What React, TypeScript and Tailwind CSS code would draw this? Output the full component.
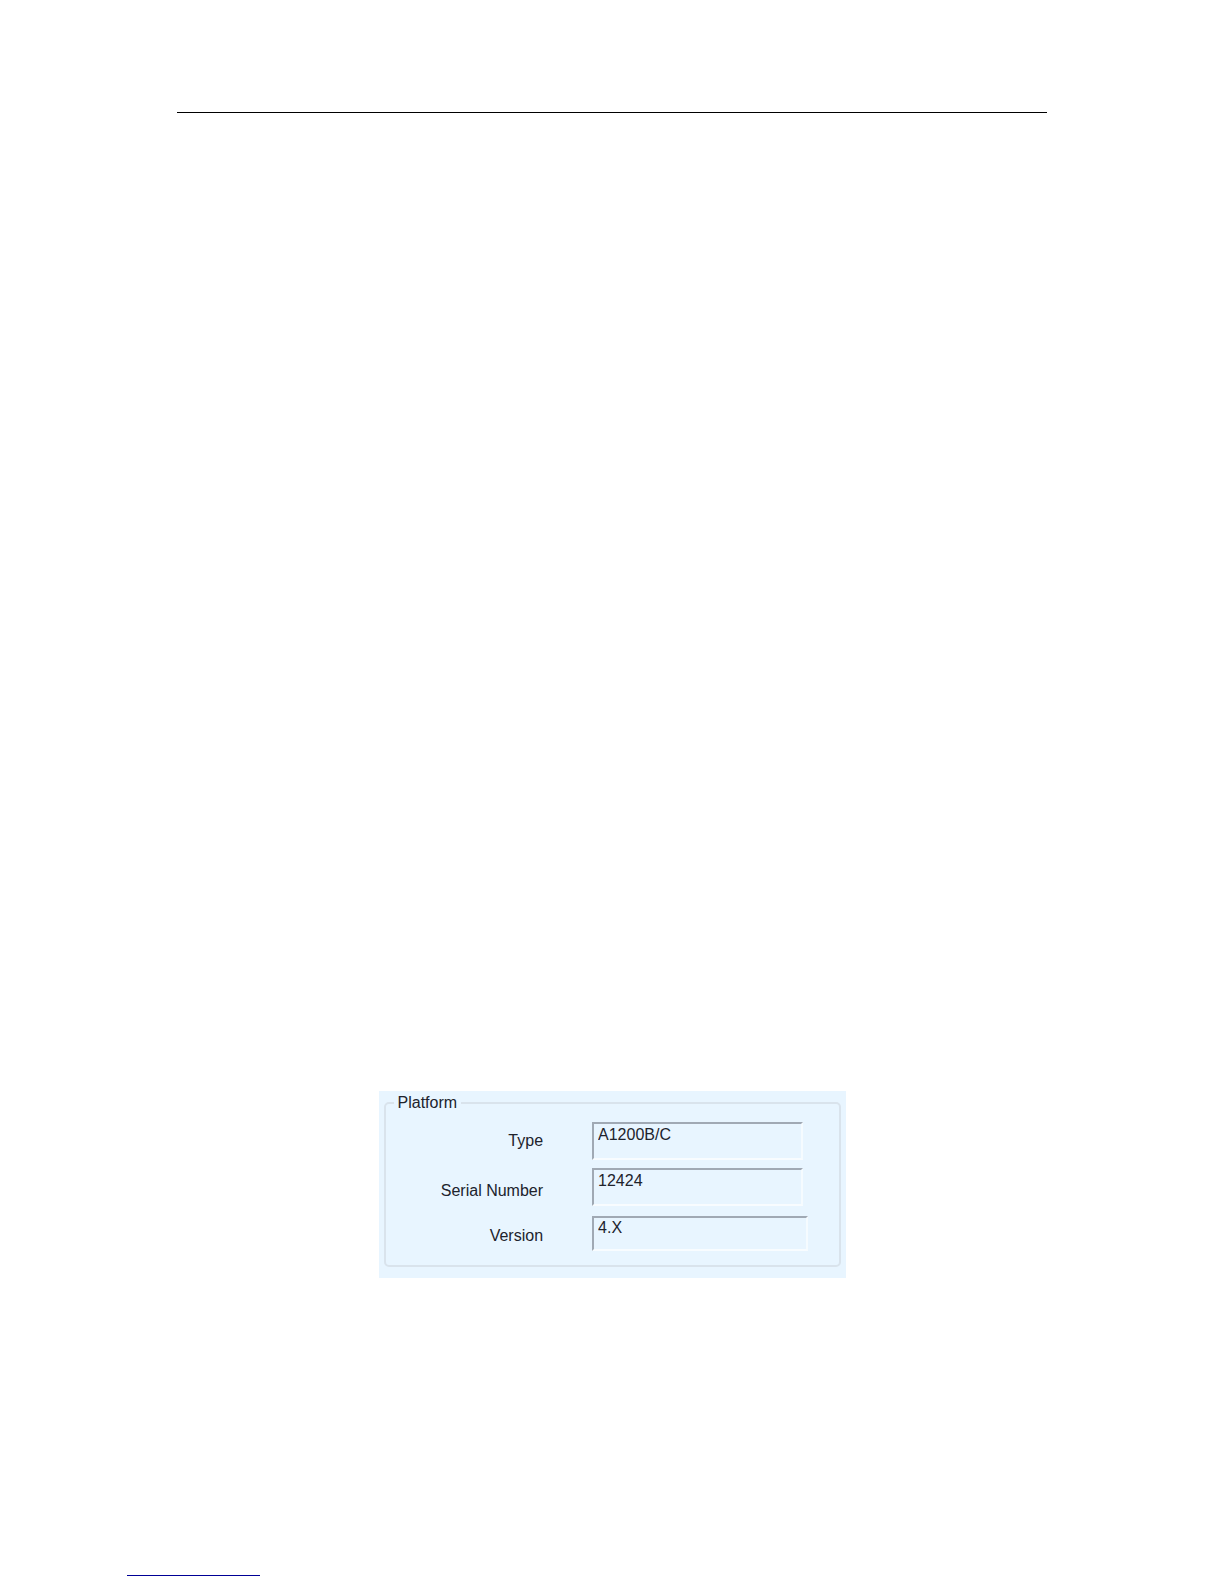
import React from "react";

type Field = {
  id: string;
  label: string;
  value: string;
  row: string;
  labelPad: string;
  box: string;
};

const fields: Field[] = [
  { id: "type", label: "Type", value: "A1200B/C", row: "", labelPad: "pb-[7px]", box: "h-[38px] mr-9" },
  { id: "serial", label: "Serial Number", value: "12424", row: "mt-2", labelPad: "pb-[3px]", box: "h-[38px] mr-9" },
  { id: "version", label: "Version", value: "4.X", row: "mt-2.5", labelPad: "pb-[3px]", box: "h-[35px] mr-[31px]" },
];

function PlatformPanel() {
  return (
    <section className="mx-auto w-full max-w-[467px] bg-[#e8f5ff] px-[5px] pt-0.5 pb-[11px] text-base leading-6 text-[#20232c]">
      <fieldset className="min-w-0 rounded-[5px] border-2 border-[#d9e3ec] pb-3.5">
        <legend className="ml-2 px-1 leading-5">Platform</legend>
        <div className="pt-[9px]">
          {fields.map((f) => (
            <div key={f.id} className={`flex items-end ${f.row}`}>
              <label htmlFor={f.id} className={`w-[35%] shrink-0 pr-px text-right ${f.labelPad}`}>
                {f.label}
              </label>
              <input
                id={f.id}
                readOnly
                defaultValue={f.value}
                className={`ml-12 min-w-0 flex-1 rounded-none border-2 border-t-[#a0a9b4] border-r-[#f5fbff] border-b-[#f8fcff] border-l-[#a0a9b4] bg-transparent pb-3 pl-1 outline-none ${f.box}`}
              />
            </div>
          ))}
        </div>
      </fieldset>
    </section>
  );
}

export default function App() {
  return (
    <div className="flex min-h-screen flex-col bg-white pt-28 pb-2 font-['Liberation_Sans',Arial,sans-serif]">
      <header className="mx-auto w-full max-w-[870px] border-t border-black" />
      <main className="flex flex-1 flex-col justify-end pb-[297px]">
        <PlatformPanel />
      </main>
      <footer className="ml-[127px] h-px w-[133px] bg-[#000096]" />
    </div>
  );
}
